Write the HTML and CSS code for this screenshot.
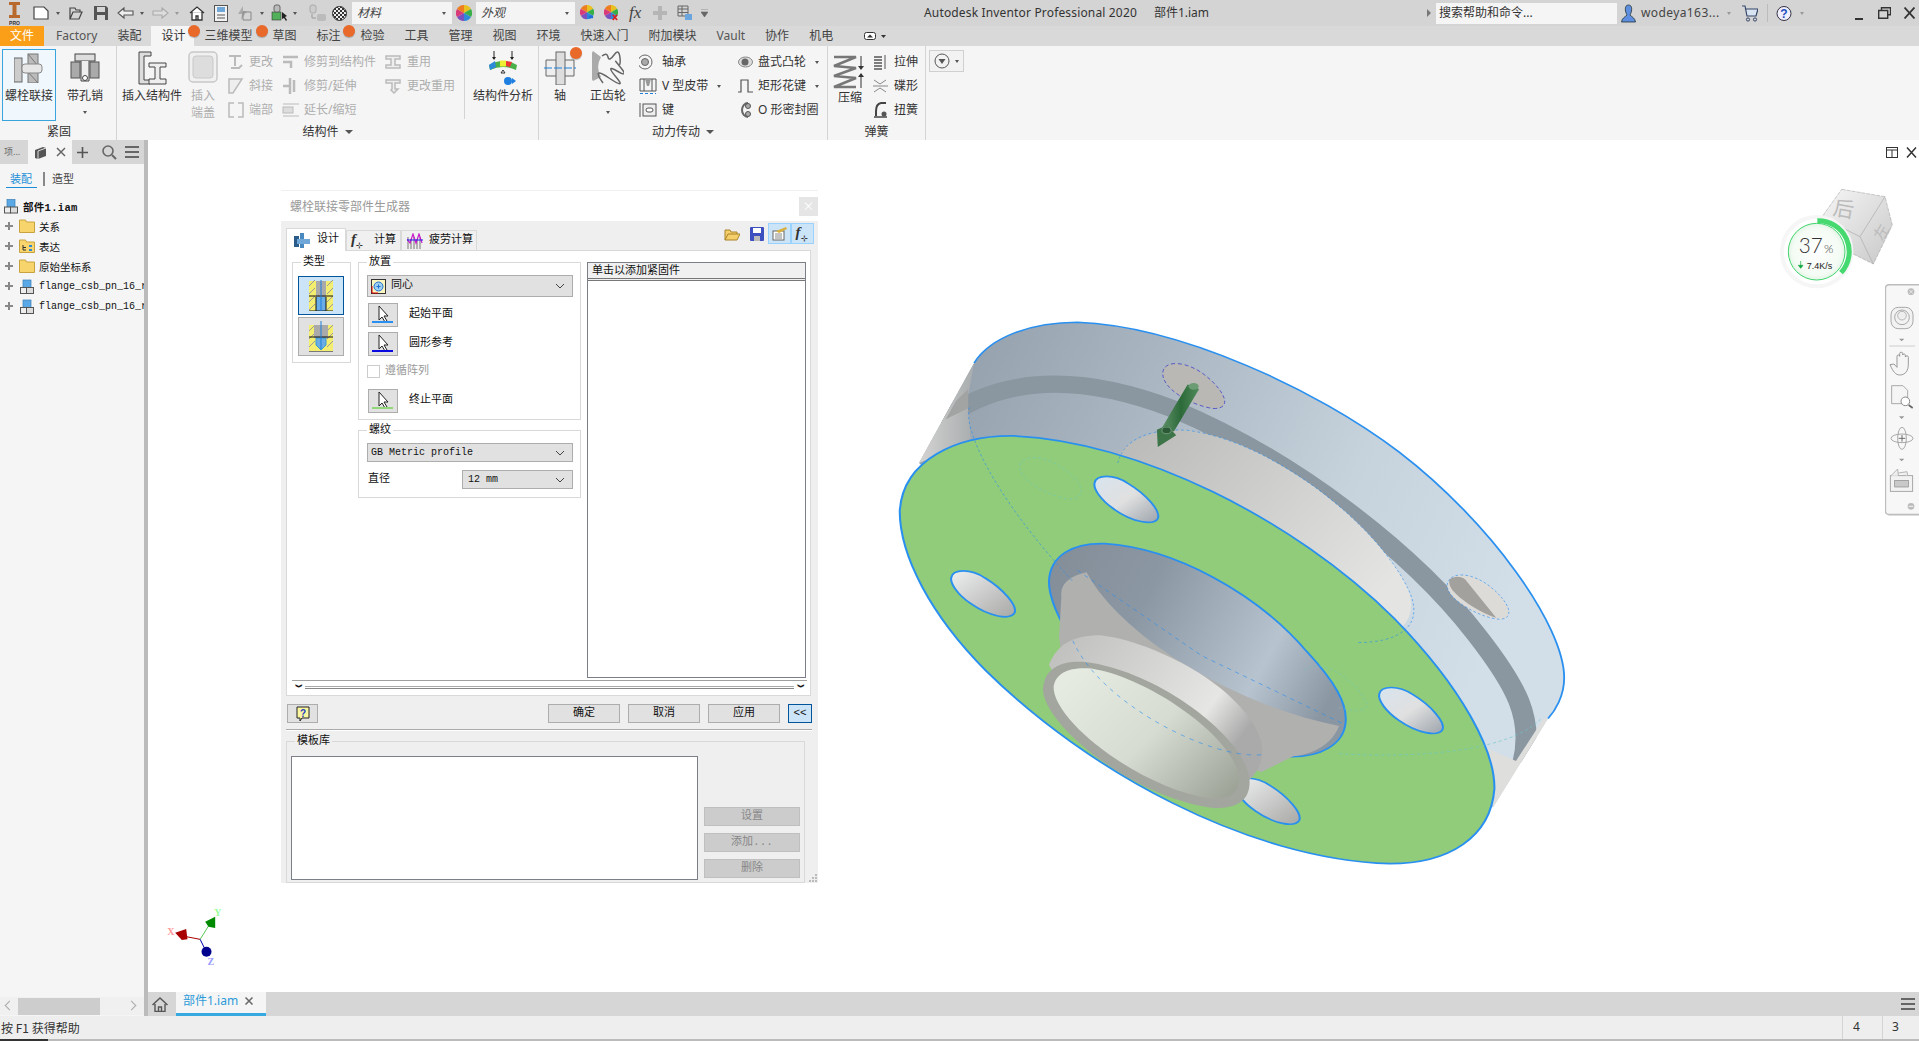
FILE: index.html
```html
<!DOCTYPE html>
<html lang="zh">
<head>
<meta charset="utf-8">
<title>Autodesk Inventor Professional 2020</title>
<link rel="stylesheet" href="styles.css">
</head>
<body>
<div class="app">
  <header class="titlebar">
    <svg class="i11 logo" width="11" height="24" viewBox="0 0 11 24"><path d="M0 1h11v3H7.5v10H11v3H0v-3h3.5V4H0z" fill="#b8692e"/><text x="5.5" y="23.500" class="protext">PRO</text></svg>
    <svg class="m13" width="16" height="16" viewBox="0 0 16 16"><path d="M1 2h10l4 4v8H1z" fill="#fff" stroke="#444" stroke-width="1.2"/></svg>
    <i class="caret m7"></i>
    <svg class="m9" width="14" height="15" viewBox="0 0 14 15"><path d="M1 13V2h5l1 2h4v2M1 13l3-7h9l-3 7z" fill="none" stroke="#444" stroke-width="1.2"/></svg>
    <svg class="m10" width="16" height="16" viewBox="0 0 16 16"><path d="M1 1h12l2 2v12H1z" fill="#555"/><rect x="4" y="2" width="8" height="5" fill="#d6d6d6"/><rect x="4" y="10" width="8" height="5" fill="#d6d6d6"/></svg>
    <svg class="m8" width="17" height="14" viewBox="0 0 17 14"><path d="M7 2L1 7l6 5V9h9V5H7z" fill="#eee" stroke="#555" stroke-width="1.100"/></svg>
    <i class="caret m6"></i>
    <svg class="m8" width="17" height="14" viewBox="0 0 17 14"><path d="M10 2l6 5-6 5V9H1V5h9z" fill="#ddd" stroke="#aaa" stroke-width="1.100"/></svg>
    <i class="caret m6 light"></i>
    <svg class="m10" width="16" height="16" viewBox="0 0 16 16"><path d="M1 8l7-6 7 6M3 7v8h10V7M7 15v-4h2v4" fill="#fff" stroke="#333" stroke-width="1.300"/></svg>
    <svg class="m9" width="14" height="17" viewBox="0 0 14 17"><rect x=".5" y=".5" width="13" height="16" fill="#f3f3f3" stroke="#555"/><rect x="3" y="2" width="8" height="5" fill="#6ea7d8"/><path d="M3 10h8M3 13h8" stroke="#555"/></svg>
    <svg class="m9" width="15" height="16" viewBox="0 0 15 16"><path d="M6 1L1 9h4l-1 6 6-9H6z" fill="#aaa"/><path d="M6 7h8v8H6z" fill="none" stroke="#888"/></svg>
    <i class="caret m8"></i>
    <svg class="m7" width="18" height="18" viewBox="0 0 18 18"><rect x="1" y="8" width="9" height="8" fill="#53b05a" stroke="#333" stroke-width=".6"/><rect x="3" y="1" width="6" height="7" rx="2" fill="#bbb" stroke="#666"/><path d="M11 8l5 4-2 1 2 3-1 1-2-3-2 1z" fill="#222"/></svg>
    <i class="caret m4"></i>
    <svg class="m11" width="19" height="18" viewBox="0 0 19 18"><rect x="2" y="1" width="6" height="8" rx="2" fill="#ccc" stroke="#aaa"/><rect x="9" y="10" width="9" height="7" rx="2" fill="#bbb"/><path d="M4 10v4h4" fill="none" stroke="#999"/></svg>
    <svg class="m5" width="15" height="15" viewBox="0 0 15 15"><defs><pattern id="chk" width="4" height="4" patternUnits="userSpaceOnUse"><rect width="4" height="4" fill="#eee"/><rect width="2" height="2" fill="#333"/><rect x="2" y="2" width="2" height="2" fill="#333"/></pattern></defs><circle cx="7.500" cy="7.500" r="7" fill="url(#chk)" stroke="#333"/></svg>
    <div class="combo m5 c100"><span>材料</span><i class="caret"></i></div>
    <svg class="m4" width="16" height="16" viewBox="0 0 16 16"><use href="#wheel"/></svg>
    <div class="combo m4 c99"><span>外观</span><i class="caret"></i></div>
    <svg class="m5" width="14" height="16" viewBox="0 0 16 18"><use href="#wheel"/><path d="M10 12h5v3h-5z" fill="#1e6fd8"/></svg>
    <svg class="m10" width="14" height="16" viewBox="0 0 16 18"><use href="#wheel"/><path d="M10 11l5 6M15 11l-5 6" stroke="#d22" stroke-width="2"/></svg>
    <span class="fx m11">fx</span>
    <svg class="m10" width="14" height="14" viewBox="0 0 14 14"><path d="M5 0h4v5h5v4H9v5H5V9H0V5h5z" fill="#b5b5b5"/></svg>
    <svg class="m10" width="16" height="16" viewBox="0 0 16 16"><path d="M1 1h10v10H1zM1 4h10M1 7.500h10M5 1v10" fill="none" stroke="#666"/><rect x="8" y="9" width="7" height="6" fill="#6aa5dd"/></svg>
    <svg class="m8" width="7" height="8" viewBox="0 0 7 8"><path d="M0 0h7M0 3h7L3.500 8z" fill="#666" stroke="#666" stroke-width=".6"/></svg>
    <span class="apptitle">Autodesk Inventor Professional 2020<span class="docname">部件1.iam</span></span>
    <div class="tb-right">
      <i class="caret-r"></i>
      <div class="search m5">搜索帮助和命令...</div>
      <svg class="m4" width="15" height="19" viewBox="0 0 15 19"><path d="M7.500 1c3 0 3.500 3 3 6-.4 2-1 3-1.500 4 2 2 5 3 5.500 7H.5C1 14 4 13 6 11c-.5-1-1.100-2-1.500-4-.5-3 0-6 3-6z" fill="#5d8ee0" stroke="#233" stroke-width=".8"/></svg>
      <span class="username m5">wodeya163...</span>
      <i class="caret m9 light"></i>
      <svg class="m11" width="16" height="17" viewBox="0 0 16 17"><path d="M0 1h3l2 10h9l2-7H4" fill="#d8e4f2" stroke="#346" stroke-width="1.200"/><circle cx="6" cy="14.500" r="1.600" fill="none" stroke="#346"/><circle cx="13" cy="14.500" r="1.600" fill="none" stroke="#346"/></svg>
      <i class="vsep m9"></i>
      <svg class="m8" width="16" height="17" viewBox="0 0 16 17"><circle cx="8" cy="8.500" r="7" fill="#eef" stroke="#334"/><text x="8" y="13" class="qmark">?</text></svg>
      <i class="caret m8 light"></i>
      <svg class="m51" width="8" height="16" viewBox="0 0 8 16"><rect y="13" width="8" height="2" fill="#333"/></svg>
      <svg class="m15" width="13" height="12" viewBox="0 0 13 12"><path d="M3.500 3V.8h9v7H10M.7 3.500h9v7.700h-9z" fill="none" stroke="#333" stroke-width="1.400"/></svg>
      <svg class="m13" width="11" height="12" viewBox="0 0 11 12"><path d="M.5 .5l10 11M10.500 .5l-10 11" stroke="#333" stroke-width="1.800"/></svg>
    </div>
  </header>
  <svg class="defs" width="0" height="0"><defs>
    <g id="wheel"><path d="M8 8L8 0A8 8 0 0 1 15 4z" fill="#e8c020"/><path d="M8 8L15 4A8 8 0 0 1 15 12z" fill="#38b048"/><path d="M8 8L15 12A8 8 0 0 1 8 16z" fill="#2d8ad8"/><path d="M8 8L8 16A8 8 0 0 1 1 12z" fill="#7a4fc0"/><path d="M8 8L1 12A8 8 0 0 1 1 4z" fill="#d83a7a"/><path d="M8 8L1 4A8 8 0 0 1 8 0z" fill="#ee7d20"/></g>
    <g id="asm"><rect x="3" y="1" width="8" height="9" fill="#5aa9e6" stroke="#3a7fb8" stroke-width=".7"/><rect x=".5" y="8.500" width="6" height="6" fill="#eee" stroke="#555"/><rect x="6.500" y="8.500" width="7" height="6" fill="#ddd" stroke="#555"/></g>
    <g id="cursorbtn"><path d="M10 2v14l3-3 3 5 2-1-3-5h4z" fill="#fff" stroke="#222"/></g>
    <linearGradient id="hole" x1="0" y1="0" x2="1" y2="1"><stop offset="0" stop-color="#eef0f0"/><stop offset="1" stop-color="#a8a8a6"/></linearGradient>
    <linearGradient id="holeblue" x1="0" y1="0" x2="1" y2="1"><stop offset="0" stop-color="#d8e4ee"/><stop offset=".5" stop-color="#e0e0e0"/><stop offset="1" stop-color="#9ca4ac"/></linearGradient>
  </defs></svg>
  <nav class="tabs">
    <span class="tab file">文件</span>
    <span class="tab lat">Factory</span>
    <span class="tab">装配</span>
    <span class="tab active">设计</span>
    <span class="tab">三维模型</span>
    <span class="tab">草图</span>
    <span class="tab">标注</span>
    <span class="tab">检验</span>
    <span class="tab">工具</span>
    <span class="tab">管理</span>
    <span class="tab">视图</span>
    <span class="tab">环境</span>
    <span class="tab">快速入门</span>
    <span class="tab">附加模块</span>
    <span class="tab lat">Vault</span>
    <span class="tab">协作</span>
    <span class="tab">机电</span>
    <svg class="tabmenu" width="22" height="8" viewBox="0 0 22 8"><rect x=".5" y=".5" width="11" height="7" rx="2" fill="#fff" stroke="#333"/><path d="M3 5.500l3-3 3 3z" fill="#333"/><path d="M17 3h5l-2.500 3z" fill="#333"/></svg>
    <i class="dot d1"></i><i class="dot d2"></i><i class="dot d3"></i>
  </nav>
  <section class="ribbon">
    <div class="panel p1">
      <div class="pbody">
        <div class="big selected w54">
          <svg width="30" height="30" viewBox="0 0 30 30"><rect x="14" y="1" width="10" height="12" fill="#bbb" stroke="#777"/><rect x="14" y="19" width="10" height="11" fill="#bbb" stroke="#777"/><path d="M14 1l10 12M14 19l10 11" stroke="#777"/><rect x="0" y="5" width="8" height="24" fill="#ccc" stroke="#666"/><rect x="8" y="11" width="20" height="9" rx="3" fill="#e6e6e6" stroke="#888"/></svg>
          <span class="lbl">螺栓联接</span>
        </div>
        <div class="big w58">
          <svg width="30" height="30" viewBox="0 0 30 30"><rect x="1" y="9" width="9" height="16" fill="#aaa" stroke="#555"/><rect x="20" y="9" width="9" height="16" fill="#aaa" stroke="#555"/><rect x="5" y="1" width="20" height="7" fill="#ddd" stroke="#444"/><path d="M11 8v20h8V8" fill="#eee" stroke="#444"/><circle cx="15" cy="25" r="2.500" fill="#fff" stroke="#444"/></svg>
          <span class="lbl">带孔销</span><i class="caret under"></i>
        </div>
      </div>
      <div class="ptitle">紧固</div>
    </div>
    <div class="panel p2">
      <div class="pbody">
        <div class="big w60 ml5">
          <svg width="30" height="34" viewBox="0 0 30 34"><path d="M2 1h12v4H7v24h6v4H2z" fill="#ddd" stroke="#444"/><path d="M12 12h17v4h-6v12h6v5H12v-5h6V16h-6z" fill="#eee" stroke="#444"/></svg>
          <span class="lbl">插入结构件</span>
        </div>
        <div class="big w34 ml4 off">
          <svg width="30" height="32" viewBox="0 0 30 32"><rect x="1" y="1" width="28" height="30" rx="4" fill="#f0f0f0" stroke="#c8c8c8" stroke-width="1.500"/><rect x="5" y="5" width="20" height="22" rx="3" fill="#ddd" stroke="#c8c8c8"/></svg>
          <span class="lbl two">插入<br>端盖</span>
        </div>
        <div class="col c54 ml8 off">
          <div class="row"><svg class="ic" width="16" height="16" viewBox="0 0 16 16"><path d="M1 2h12M7 2v10M3 14h8l3-3" fill="none" stroke="#bbb" stroke-width="2"/></svg><span>更改</span></div>
          <div class="row"><svg class="ic" width="16" height="16" viewBox="0 0 16 16"><path d="M1 1h13L5 15H1z" fill="#eee" stroke="#bbb" stroke-width="1.500"/></svg><span>斜接</span></div>
          <div class="row"><svg class="ic" width="16" height="16" viewBox="0 0 16 16"><path d="M6 1H1v14h5M10 1h5v14h-5" fill="none" stroke="#bbb" stroke-width="1.500"/></svg><span>端部</span></div>
        </div>
        <div class="col c103 off">
          <div class="row"><svg class="ic17" width="17" height="16" viewBox="0 0 17 16"><path d="M1 3h15M1 8h8v6" fill="none" stroke="#bbb" stroke-width="2.500"/></svg><span>修剪到结构件</span></div>
          <div class="row"><svg class="ic17" width="17" height="16" viewBox="0 0 17 16"><path d="M8 0v16M12 2v12M1 8h6" fill="none" stroke="#bbb" stroke-width="2.500"/></svg><span>修剪/延伸</span></div>
          <div class="row"><svg class="ic17" width="17" height="16" viewBox="0 0 17 16"><path d="M1 2h16M1 14h16" fill="none" stroke="#bbb"/><rect x="1" y="5" width="10" height="6" fill="#ddd" stroke="#bbb"/></svg><span>延长/缩短</span></div>
        </div>
        <div class="col c79 off">
          <div class="row wide"><svg class="ic" width="16" height="16" viewBox="0 0 16 16"><path d="M1 2h14v3h-5v6h5v3H1v-3h5V5H1z" fill="#eee" stroke="#bbb" stroke-width="1.500"/></svg><span>重用</span></div>
          <div class="row wide"><svg class="ic" width="16" height="16" viewBox="0 0 16 16"><path d="M1 2h14v3h-5v6h3l-4 4-3-3 1-1V5H1z" fill="#eee" stroke="#bbb" stroke-width="1.500"/></svg><span>更改重用</span></div>
        </div>
        <i class="rsep"></i>
        <div class="big w60 ml8">
          <svg width="30" height="36" viewBox="0 0 30 36"><path d="M6 0v8M24 0v8" stroke="#222"/><path d="M4 6l2 3 2-3zM22 6l2 3 2-3z" fill="#222"/><path d="M1 14q14-8 28 0l-1 5q-13-6-26 0z" fill="#4ab04a"/><path d="M1 14l6-4 1 6-6 3z" fill="#2d8ad8"/><path d="M12 9.500h6v6h-6z" fill="#ee3"/><path d="M18 10l6 1-2 5-4-1z" fill="#e33"/><path d="M13 22l2-3 2 3z" fill="none" stroke="#333"/><circle cx="20" cy="30" r="4" fill="#1e7fe0"/><path d="M24 27l4 3-4 3z" fill="#1e7fe0"/></svg>
          <span class="lbl">结构件分析</span>
        </div>
      </div>
      <div class="ptitle">结构件<i class="caret ct"></i></div>
    </div>
    <div class="panel p3">
      <div class="pbody">
        <div class="big w36 ml3">
          <svg width="32" height="34" viewBox="0 0 32 34"><path d="M2 9h28v16H2z" fill="#eee" stroke="#666"/><rect x="12" y="1" width="9" height="33" fill="#ddd" stroke="#666"/><path d="M0 17h32" stroke="#1e7fd8" stroke-dasharray="8 2"/></svg>
          <span class="lbl">轴</span>
          <i class="dot d4"></i>
        </div>
        <div class="big w40 ml10">
          <svg width="32" height="36" viewBox="0 0 32 36"><path d="M1 0a30 30 0 0 0 0 30l8-4a20 20 0 0 1 0-20z" fill="#aaa"/><path d="M10 5q5-4 6 1t6-2 6 3-3 5 4 5-4 3-1 6-7 1-6 5" fill="none" stroke="#666" stroke-width="1.500"/></svg>
          <span class="lbl">正齿轮</span><i class="caret under"></i>
        </div>
        <div class="col c98 ml11">
          <div class="row r18"><svg class="ic18" width="18" height="16" viewBox="0 0 18 16"><circle cx="6" cy="8" r="7" fill="none" stroke="#666"/><circle cx="6" cy="8" r="3.500" fill="#aaa" stroke="#666"/></svg><span>轴承</span></div>
          <div class="row r18"><svg class="ic18" width="18" height="16" viewBox="0 0 18 16"><path d="M1 1h16v12H1zM5 1v12M13 1v12" fill="none" stroke="#555"/><path d="M6 1h6l-2 7H8z" fill="#999"/><path d="M1 15.500h16" stroke="#1e7fd8" stroke-dasharray="3 2"/></svg><span>V 型皮带</span><i class="caret cr"></i></div>
          <div class="row r18"><svg class="ic18" width="18" height="16" viewBox="0 0 18 16"><path d="M1 1v14" stroke="#555"/><rect x="4" y="2" width="13" height="12" fill="#eee" stroke="#555"/><rect x="7" y="6" width="7" height="4" rx="2" fill="#fff" stroke="#555"/></svg><span>键</span></div>
        </div>
        <div class="col c90 ml1">
          <div class="row r15"><svg class="ic15" width="15" height="12" viewBox="0 0 15 12"><ellipse cx="7.500" cy="6" rx="7" ry="5" fill="#ddd" stroke="#888"/><circle cx="7" cy="6" r="3.500" fill="#666"/></svg><span>盘式凸轮</span><i class="caret cr"></i></div>
          <div class="row r15"><svg class="ic15" width="15" height="14" viewBox="0 0 15 14"><path d="M0 13h3V1h7v12h5" fill="none" stroke="#555" stroke-width="1.200"/></svg><span>矩形花键</span><i class="caret cr"></i></div>
          <div class="row r15"><svg class="ic15" width="15" height="16" viewBox="0 0 15 16"><path d="M10 1a6 7 0 1 0 0 14" fill="none" stroke="#666" stroke-width="2"/><circle cx="10" cy="4" r="2.500" fill="#aaa" stroke="#555"/><circle cx="10" cy="12" r="2.500" fill="#aaa" stroke="#555"/></svg><span>O 形密封圈</span></div>
        </div>
      </div>
      <div class="ptitle">动力传动<i class="caret ct"></i></div>
    </div>
    <div class="panel p4">
      <div class="pbody">
        <div class="big w44">
          <svg class="spring" width="34" height="34" viewBox="0 0 34 34"><path d="M1 2h22L1 11l22 2L1 21l22 2L1 32h22" fill="none" stroke="#777" stroke-width="2.500"/><path d="M28 1v12M28 33V20" stroke="#333"/><path d="M25 11l3 4 3-4zM25 22l3-4 3 4z" fill="#333"/></svg>
          <span class="lbl">压缩</span>
        </div>
        <div class="col c50">
          <div class="row r15b"><svg class="ic15" width="15" height="16" viewBox="0 0 15 16"><path d="M1 3h8M1 6h8M1 9h8M1 12h8M1 15h8" stroke="#555" stroke-width="1.400"/><path d="M12 1v14" stroke="#555"/></svg><span>拉伸</span></div>
          <div class="row r15b"><svg class="ic15" width="15" height="14" viewBox="0 0 15 14"><path d="M1 1l6 4 6-4M1 13l6-4 6 4M0 7h15" fill="none" stroke="#888"/></svg><span>碟形</span></div>
          <div class="row r15b"><svg class="ic15" width="15" height="16" viewBox="0 0 15 16"><path d="M13 1H8Q3 2 3 9v5" fill="none" stroke="#444" stroke-width="2"/><path d="M1 15h13" stroke="#444" stroke-width="1.500"/><circle cx="11" cy="12" r="2.500" fill="#555"/></svg><span>扭簧</span></div>
        </div>
      </div>
      <div class="ptitle">弹簧</div>
    </div>
    <div class="rdrop">
      <svg width="16" height="16" viewBox="0 0 16 16"><circle cx="8" cy="8" r="7" fill="none" stroke="#555"/><path d="M4.500 6h7L8 11z" fill="#555"/></svg>
      <i class="caret"></i>
    </div>
  </section>
  <main class="middle">
    <aside class="browser">
      <div class="bhead">
        <span class="btab">项...</span>
        <span class="btab act"><svg width="13" height="13" viewBox="0 0 13 13"><path d="M1 4l8-3 3 1v8l-8 3-3-1z" fill="#555"/><path d="M4 5l8-3M4 5v8" stroke="#ddd"/></svg><svg width="10" height="10" viewBox="0 0 10 10"><path d="M1 1l8 8M9 1l-8 8" stroke="#666" stroke-width="1.500"/></svg></span>
        <svg class="bplus" width="11" height="11" viewBox="0 0 11 11"><path d="M5.500 0v11M0 5.500h11" stroke="#555" stroke-width="1.600"/></svg>
        <svg class="bsearch" width="15" height="15" viewBox="0 0 15 15"><circle cx="6" cy="6" r="5" fill="none" stroke="#666" stroke-width="1.600"/><path d="M10 10l4 4" stroke="#666" stroke-width="2"/></svg>
        <svg class="bmenu" width="14" height="12" viewBox="0 0 14 12"><path d="M0 1h14M0 6h14M0 11h14" stroke="#666" stroke-width="2"/></svg>
      </div>
      <div class="seg"><span class="segon">装配</span><i class="segbar"></i><span class="segoff">造型</span></div>
      <ul class="tree">
        <li class="root"><svg width="14" height="16" viewBox="0 0 14 15"><use href="#asm"/></svg><b>部件1.iam</b></li>
        <li><i class="plus"></i><svg class="folder" width="16" height="14" viewBox="0 0 16 14"><path d="M.5 13.500V1h6l1 2h8v10.500z" fill="#f8d56c" stroke="#c9a240"/></svg><span>关系</span></li>
        <li><i class="plus"></i><svg class="folder" width="16" height="14" viewBox="0 0 16 14"><path d="M.5 13.500V1h6l1 2h8v10.500z" fill="#f8d56c" stroke="#c9a240"/><path d="M4 6v5h3M4 8.500h3" fill="none" stroke="#333"/><rect x="10" y="6" width="3" height="2" fill="#2d8ad8"/><rect x="10" y="10" width="3" height="2" fill="#2d8ad8"/></svg><span>表达</span></li>
        <li><i class="plus"></i><svg class="folder" width="16" height="14" viewBox="0 0 16 14"><path d="M.5 13.500V1h6l1 2h8v10.500z" fill="#f8d56c" stroke="#c9a240"/></svg><span>原始坐标系</span></li>
        <li><i class="plus"></i><svg class="folder" width="14" height="15" viewBox="0 0 14 15"><use href="#asm"/></svg><span class="clip">flange_csb_pn_16_r</span></li>
        <li><i class="plus"></i><svg class="folder" width="14" height="15" viewBox="0 0 14 15"><use href="#asm"/></svg><span class="clip">flange_csb_pn_16_r</span></li>
      </ul>
      <div class="hscroll"><i class="hl"></i><i class="thumb"></i><i class="hr"></i></div>
    </aside>
    <div class="splitter"></div>
    <div class="workarea">
      <div class="canvas">
        <svg class="model" width="720" height="580" viewBox="0 0 1568 1566" preserveAspectRatio="none">
          <defs>
            <clipPath id="sil"><path d="M85 440L205 170C240 100 330 60 430 60C650 70 950 240 1130 410C1330 600 1490 880 1490 1020C1490 1070 1470 1110 1455 1130L1335 1370L600 1000Z"/></clipPath>
            <linearGradient id="rim" x1="0" y1="0" x2="1" y2=".35"><stop offset="0" stop-color="#8f9ba6"/><stop offset=".35" stop-color="#a9b5c0"/><stop offset=".7" stop-color="#c6d2dc"/><stop offset="1" stop-color="#d2dee8"/></linearGradient>
            <linearGradient id="wedge" x1="0" y1="0" x2="1" y2="0"><stop offset="0" stop-color="#d4d4d2"/><stop offset="1" stop-color="#a8acae"/></linearGradient>
            <linearGradient id="neck" x1="0" y1="0" x2="1" y2=".6"><stop offset="0" stop-color="#b8b8b6"/><stop offset="1" stop-color="#e4e4e2"/></linearGradient>
            <linearGradient id="recess" x1="0" y1=".2" x2="1" y2=".6"><stop offset="0" stop-color="#858f9a"/><stop offset=".3" stop-color="#8b97a3"/><stop offset=".75" stop-color="#b7c3cf"/><stop offset="1" stop-color="#8a96a2"/></linearGradient>
            <linearGradient id="hub" x1="0" y1="0" x2="1" y2=".5"><stop offset="0" stop-color="#bdbdbb"/><stop offset=".5" stop-color="#d6d6d4"/><stop offset=".8" stop-color="#e6e6e4"/><stop offset="1" stop-color="#aaa"/></linearGradient>
            <linearGradient id="face" x1="0" y1=".2" x2="1" y2=".9"><stop offset="0" stop-color="#e6ebe2"/><stop offset=".5" stop-color="#d6dcd2"/><stop offset="1" stop-color="#9ea398"/></linearGradient>
            <linearGradient id="arrow" x1="0" y1="0" x2="1" y2="0"><stop offset="0" stop-color="#5d9067"/><stop offset=".5" stop-color="#2d6a3a"/><stop offset="1" stop-color="#4f8a5a"/></linearGradient>
          </defs>
          <path d="M85 440L205 170C240 100 330 60 430 60C650 70 950 240 1130 410C1330 600 1490 880 1490 1020C1490 1070 1470 1110 1455 1130L1335 1370L600 1000Z" fill="url(#rim)"/>
          <g clip-path="url(#sil)"><path d="M130 330C260 205 430 195 640 295C900 430 1160 680 1300 905C1385 1040 1425 1130 1400 1250" fill="none" stroke="#8a96a0" stroke-width="46"/></g>
          <path d="M85 440L205 170L190 270L198 380Z" fill="url(#wedge)"/>
          <path d="M192 240L192 292L143 322L166 272Z" fill="#a2a3a3"/>
          <path d="M505 440C540 370 600 350 670 352C850 380 1080 600 1150 780C1175 860 1130 925 1040 925Z" fill="url(#neck)"/>
          <path d="M1322 1210L1385 1245L1445 1130L1455 1130L1335 1370Z" fill="#dededc"/>
          <path d="M1235 770C1240 730 1290 735 1330 775C1370 815 1385 860 1350 862C1310 860 1235 810 1235 770Z" fill="#dddbd8"/>
          <path d="M1240 755C1250 745 1265 745 1275 755L1342 858C1320 850 1290 830 1270 810C1250 790 1237 775 1240 755Z" fill="#a3a19e"/>
          <path d="M1235 770C1240 730 1290 735 1330 775C1370 815 1385 860 1350 862C1310 860 1235 810 1235 770Z" fill="none" stroke="#2a90f0" stroke-width="1.500" stroke-dasharray="6 5"/>
          <path d="M616 195C620 160 670 165 710 205C750 245 770 295 725 293C680 285 612 240 616 195Z" fill="#b9b8b4"/>
          <path d="M616 195C620 160 670 165 710 205C750 245 770 295 725 293C680 285 612 240 616 195Z" fill="none" stroke="#2222cc" stroke-width="1.500" stroke-dasharray="9 6"/>
          <path d="M43 570C50 430 170 365 290 367C560 380 900 590 1120 860C1270 1050 1340 1220 1338 1320C1330 1450 1240 1522 1110 1522C800 1510 450 1270 230 1000C110 850 43 690 43 570Z" fill="#90cc7a"/>
          <path d="M205 170C240 100 330 60 430 60C650 70 950 240 1130 410C1330 600 1490 880 1490 1020C1490 1070 1470 1110 1455 1130" fill="none" stroke="#2a90f0" stroke-width="4"/>
          <path d="M43 570C50 430 170 365 290 367C560 380 900 590 1120 860C1270 1050 1340 1220 1338 1320C1330 1450 1240 1522 1110 1522C800 1510 450 1270 230 1000C110 850 43 690 43 570Z" fill="none" stroke="#2a90f0" stroke-width="4.500"/>
          <path d="M467 495C470 470 510 470 540 495C580 525 612 570 605 590C595 610 550 600 510 565C480 540 465 510 467 495Z" fill="url(#holeblue)" stroke="#2a90f0" stroke-width="4.500"/>
          <path d="M155 750C158 725 198 725 228 750C268 780 300 825 293 845C283 865 238 855 198 820C168 795 153 765 155 750Z" fill="url(#hole)" stroke="#2a90f0" stroke-width="4.500"/>
          <path d="M1087 1065C1090 1040 1130 1040 1160 1065C1200 1095 1232 1140 1225 1160C1215 1180 1170 1170 1130 1135C1100 1110 1085 1080 1087 1065Z" fill="url(#holeblue)" stroke="#2a90f0" stroke-width="4.500"/>
          <path d="M775 1310C778 1285 818 1285 848 1310C888 1340 920 1385 913 1405C903 1425 858 1415 818 1380C788 1355 773 1325 775 1310Z" fill="url(#hole)" stroke="#2a90f0" stroke-width="4.500"/>
          <path d="M368 760C370 690 420 655 490 658C640 670 820 790 930 950C990 1030 1018 1090 1014 1140C1010 1200 960 1235 890 1233C700 1220 480 1060 400 880C378 830 368 790 368 760Z" fill="url(#recess)" stroke="#2a90f0" stroke-width="4.500"/>
          <path d="M395 800C392 770 410 745 450 735C520 900 760 1090 1000 1150C985 1195 950 1225 900 1232L830 1275L400 1000L390 910Z" fill="#b0b0ae"/>
          <path d="M368 985C385 930 420 905 480 905C590 920 790 1040 830 1190C838 1240 825 1275 800 1300L420 1100Z" fill="url(#hub)"/>
          <path d="M355 1050C358 990 400 972 450 978C600 1000 800 1180 805 1300C805 1350 780 1372 730 1372C560 1350 355 1150 355 1050Z" fill="#a3a69f"/>
          <path d="M378 1045C382 1005 415 990 460 995C590 1020 780 1190 782 1295C780 1335 760 1348 720 1346C570 1320 378 1140 378 1045Z" fill="url(#face)"/>
          <path d="M195 290C180 340 240 520 420 760" fill="none" stroke="#2a90f0" stroke-width="1.500" stroke-dasharray="7 6"/>
          <path d="M1000 1225C1200 1240 1380 1210 1440 1130" fill="none" stroke="#6ac8c8" stroke-width="1.500" stroke-dasharray="7 6"/>
          <path d="M430 730L700 960L1010 1145" fill="none" stroke="#2a90f0" stroke-width="1.500" stroke-dasharray="10 10"/>
          <path d="M518 440C530 370 600 345 670 352C850 380 1080 600 1150 780C1190 880 1130 925 1040 925" fill="none" stroke="#2a90f0" stroke-width="1.500" stroke-dasharray="6 6"/>
          <path d="M420 920C480 1090 720 1240 830 1228" fill="none" stroke="#2a90f0" stroke-width="1.500" stroke-dasharray="10 12"/>
          <path d="M925 1000C960 960 1040 1030 1060 1090C1060 1115 1030 1110 1000 1100" fill="none" stroke="#6ac8c8" stroke-width="1.200" stroke-dasharray="6 6"/>
          <path d="M305 445C320 405 390 430 430 490C450 525 430 545 400 535C350 520 300 480 305 445Z" fill="none" stroke="#6ac8c8" stroke-width="1.200" stroke-dasharray="6 6"/>
          <path d="M670 228L695 240L640 355L615 343Z" fill="url(#arrow)"/>
          <ellipse cx="683" cy="233" rx="11" ry="9" fill="#6b9c74"/>
          <path d="M603 350L625 338L645 365L605 397Z" fill="#3d7548"/>
          <ellipse cx="624" cy="352" rx="10" ry="9" fill="#2d5a36" stroke="#7aa684" stroke-width="2"/>
        </svg>
        <svg class="gauge" width="159" height="250" viewBox="0 30 477 750">
          <defs><radialGradient id="gfill" cx=".5" cy=".5" r=".6"><stop offset="0" stop-color="#fff"/><stop offset=".7" stop-color="#f4fbf4"/><stop offset="1" stop-color="#cfeed5"/></radialGradient><linearGradient id="cube" x1="0" y1="0" x2="1" y2="1"><stop offset="0" stop-color="#f6f6f6"/><stop offset="1" stop-color="#c8c8c8"/></linearGradient></defs>
          <path d="M245 178L375 200L397 285L340 402L265 365L185 262Z" fill="url(#cube)" stroke="#999" stroke-width="1.500" stroke-dasharray="12 3"/>
          <path d="M375 200L300 320L340 402M300 320L185 262" fill="none" stroke="#aaa" stroke-width="2"/>
          <text x="220" y="262" class="cubetxt" transform="rotate(10 265 240)">后</text>
          <text x="335" y="330" class="cubetxt small" transform="rotate(-60 355 305)">左</text>
          <circle cx="170" cy="365" r="104" fill="#fff" stroke="#f6f6f6" stroke-width="12"/>
          <circle cx="170" cy="365" r="85" fill="url(#gfill)" stroke="#3fd46b" stroke-width="3"/>
          <path d="M172 272A93 93 0 0 1 243 428" fill="none" stroke="#45d96f" stroke-width="15"/>
          <text x="116" y="368" class="g37">37</text>
          <text x="192" y="369" class="gpc">%</text>
          <path d="M122 393v20M115 406l7 9 7-9z" fill="#12a83c" stroke="#12a83c" stroke-width="2"/>
          <text x="140" y="416" class="gk">7.4K/s</text>
        </svg>
        <svg class="navbar" width="36" height="232" viewBox="375 463 108 696">
          <rect x="376" y="465" width="120" height="690" rx="12" fill="#f7f7f7" stroke="#bdbdbd" stroke-width="5"/>
          <circle cx="453" cy="486" r="10" fill="#bbb"/><path d="M447 480l12 12M459 480l-12 12" stroke="#fff" stroke-width="2"/>
          <rect x="393" y="533" width="66" height="64" rx="22" fill="#f2f2f2" stroke="#999" stroke-width="2.500"/><circle cx="426" cy="563" r="22" fill="none" stroke="#999" stroke-width="2.500"/><circle cx="426" cy="558" r="13" fill="#eee" stroke="#999" stroke-width="2"/>
          <path d="M417 627h16l-8 8z" fill="#999"/><path d="M388 649h77" stroke="#bbb" stroke-width="2"/>
          <path d="M390 705l12-2 9 10V680a4 4 0 0 1 8 0v-8a4 4 0 0 1 9 0v4a4 4 0 0 1 8 2v4a4 4 0 0 1 9 2v20c0 18-8 32-26 32-12 0-20-10-29-31z" fill="#f5f5f5" stroke="#888" stroke-width="2.500"/>
          <path d="M395 768h34l14 14v40h-48z" fill="#f5f5f5" stroke="#999" stroke-width="2.500"/><circle cx="436" cy="815" r="13" fill="#fff" stroke="#888" stroke-width="3"/><path d="M446 826l12 9" stroke="#666" stroke-width="5"/>
          <path d="M417 860h16l-8 8z" fill="#999"/>
          <ellipse cx="426" cy="926" rx="33" ry="13" fill="none" stroke="#999" stroke-width="2.500"/><ellipse cx="426" cy="926" rx="13" ry="33" fill="none" stroke="#999" stroke-width="2.500"/><path d="M416 926h20M426 916v20" stroke="#555" stroke-width="2.500"/>
          <path d="M417 987h16l-8 8z" fill="#999"/>
          <rect x="391" y="1038" width="67" height="47" fill="#f2f2f2" stroke="#999" stroke-width="2.500"/><rect x="404" y="1052" width="41" height="20" fill="#c9c9c9" stroke="#888" stroke-width="2"/><path d="M393 1038l20-20 2 20M415 1030l26-4 2 12" fill="#eee" stroke="#999" stroke-width="2"/>
          <circle cx="453" cy="1130" r="10" fill="#bbb"/><path d="M446 1130h14" stroke="#fff" stroke-width="2.500"/>
        </svg>
        <svg class="corner" width="31" height="11" viewBox="0 0 31 11"><rect x=".5" y=".5" width="11" height="10" fill="#fff" stroke="#333"/><path d="M0 3h12M6 3v8" stroke="#333"/><path d="M21 .5l9 10M30 .5l-9 10" stroke="#333" stroke-width="1.500"/></svg>
        <svg class="triad" width="67" height="70" viewBox="480 30 200 210">
          <path d="M600 148L558 140" stroke="#a00" stroke-width="3"/><path d="M600 148L625 108" stroke="#0a0" stroke-width="2"/><path d="M600 148L618 185" stroke="#00a" stroke-width="3"/>
          <path d="M525 128L558 117L562 148L545 150Z" fill="#a80000"/><path d="M615 95L645 80V114L625 110Z" fill="#008a00"/><circle cx="619" cy="185" r="15" fill="#00008e"/>
          <text x="501" y="136" class="ax axx">X</text><text x="642" y="78" class="ax axy">Y</text><text x="622" y="225" class="ax axz">Z</text>
        </svg>
        <div class="dialog">
          <div class="dtitle"><span>螺栓联接零部件生成器</span><i class="dclose">×</i></div>
          <div class="dbody">
            <div class="dtabs">
              <div class="dtab on"><svg width="16" height="15" viewBox="0 0 16 15"><rect x="0" y="3" width="5" height="11" fill="#2b5b88"/><rect x="6" y="0" width="4" height="15" fill="#4a88c0"/><rect x="3" y="6" width="13" height="5" fill="#6ea7d8"/></svg><span>设计</span></div>
              <div class="dtab t2"><span class="fxi">f<sub>⊹</sub></span><span>计算</span></div>
              <div class="dtab t3"><svg width="16" height="16" viewBox="0 0 16 16"><path d="M1 4v12M4 6v10M7 4v12M10 6v10M13 4v12" stroke="#777"/><path d="M0 6l3 4 3-9 3 9 3-9 3 9" fill="none" stroke="#c818c8" stroke-width="1.200"/><path d="M0 7h16" stroke="#2222ee"/></svg><span>疲劳计算</span></div>
              <div class="dtools">
                <svg class="tool" width="16" height="14" viewBox="0 0 16 14"><path d="M1 13V3h5l1 2h6v2M1 13l3-6h12l-3 6z" fill="#f5cf6a" stroke="#a8842a"/></svg>
                <svg class="tool s1" width="14" height="14" viewBox="0 0 14 14"><rect width="14" height="14" rx="1" fill="#3b4fc0"/><rect x="3" y="1" width="8" height="5" fill="#fff"/><rect x="4" y="9" width="6" height="5" fill="#bbb"/></svg>
                <div class="toolon"><svg width="16" height="15" viewBox="0 0 16 15"><rect x="1" y="5" width="11" height="9" fill="#fff" stroke="#666"/><path d="M3 8h7M3 10h7M3 12h7" stroke="#888"/><path d="M4 5l10-4 1 2-8 4z" fill="#d8b040"/></svg></div>
                <div class="toolon"><span class="fxi">f<sub>⊹</sub></span></div>
              </div>
            </div>
            <div class="dpanel">
              <div class="dcols">
                <div class="group gtype">
                  <span class="legend">类型</span>
                  <div class="tbtn sel"><svg width="24" height="31" viewBox="0 0 24 31"><rect x="0" y="1" width="24" height="30" fill="#f4ee70"/><path d="M0 6l6-6M0 14l6-6M0 22l6-6M0 30l6-6M18 6l6-6M18 14l6-6M18 22l6-6M18 30l6-6" stroke="#999"/><rect x="7" y="1" width="10" height="16" fill="#aaa"/><rect x="7" y="17" width="10" height="14" fill="#6aace6"/><path d="M0 16h24M0 31h24M7 17v14M17 17v14" stroke="#111"/><path d="M12 0v31" stroke="#1e7fd8"/></svg></div>
                  <div class="tbtn"><svg width="24" height="31" viewBox="0 0 24 31"><rect x="0" y="4" width="24" height="26" fill="#f4ee70"/><path d="M0 10l6-6M0 18l6-6M0 26l6-6M18 10l6-6M18 18l6-6M18 26l6-6" stroke="#999"/><rect x="5" y="4" width="14" height="13" fill="#aaa"/><path d="M7 17h10v7l-5 5-5-5z" fill="#6aace6" stroke="#3a9ac8"/><path d="M0 16h24M0 31h24" stroke="#111"/><path d="M12 0v28" stroke="#1e7fd8"/></svg></div>
                </div>
                <div class="dcol2">
                  <div class="group gplace">
                    <span class="legend">放置</span>
                    <div class="dd"><svg class="ddic" width="15" height="15" viewBox="0 0 15 15"><rect x=".5" y=".5" width="14" height="14" fill="#fbf6c0" stroke="#333"/><circle cx="7.500" cy="7.500" r="4.500" fill="#9ccff0" stroke="#1e6fd0"/><path d="M5.500 7.500h4M7.500 5.500v4" stroke="#1e6fd0"/><path d="M1 7v7h6" fill="none" stroke="#d00"/></svg><span>同心</span><svg class="chev" width="10" height="6" viewBox="0 0 10 6"><path d="M1 1l4 4 4-4" fill="none" stroke="#444"/></svg></div>
                    <div class="prow first"><div class="pbtn"><svg width="30" height="24" viewBox="0 0 30 24"><use href="#cursorbtn" transform="translate(1 1)"/><rect x="4" y="18" width="21" height="2" fill="#2b8ff0"/></svg></div><span>起始平面</span></div>
                    <div class="prow second"><div class="pbtn"><svg width="30" height="24" viewBox="0 0 30 24"><use href="#cursorbtn" transform="translate(1 1)"/><rect x="4" y="18" width="21" height="2" fill="#0a0ae0"/></svg></div><span>圆形参考</span></div>
                    <div class="chkrow"><i class="chk"></i><span>遵循阵列</span></div>
                    <div class="prow last"><div class="pbtn"><svg width="30" height="24" viewBox="0 0 30 24"><use href="#cursorbtn" transform="translate(1 1)"/><rect x="4" y="18" width="21" height="2" fill="#90d878"/></svg></div><span>终止平面</span></div>
                  </div>
                  <div class="group gthread">
                    <span class="legend">螺纹</span>
                    <div class="dd thin mono"><span>GB Metric profile</span><svg class="chev" width="10" height="6" viewBox="0 0 10 6"><path d="M1 1l4 4 4-4" fill="none" stroke="#444"/></svg></div>
                    <div class="diarow"><span class="dialbl">直径</span><div class="dd thin mono w111"><span>12 mm</span><svg class="chev" width="10" height="6" viewBox="0 0 10 6"><path d="M1 1l4 4 4-4" fill="none" stroke="#444"/></svg></div></div>
                  </div>
                </div>
                <div class="fastlist"><div class="flhead">单击以添加紧固件</div></div>
              </div>
              <div class="expand"><span class="dbl">︾</span><i class="dline"></i><span class="dbl">︾</span></div>
            </div>
            <div class="dbtns">
              <div class="hbtn"><svg width="14" height="16" viewBox="0 0 14 16"><path d="M1 1h12v11H6l-2 3v-3H1z" fill="#fbf6a0" stroke="#222"/><text x="7" y="10.500" class="qm2">?</text></svg></div>
              <div class="btn okb">确定</div><div class="btn">取消</div><div class="btn">应用</div><div class="btn back">&lt;&lt;</div>
            </div>
            <div class="dsep"></div>
            <div class="group glib">
              <span class="legend">模板库</span>
              <div class="liblist"></div>
              <div class="libbtns"><div class="dis">设置</div><div class="dis">添加...</div><div class="dis">删除</div></div>
            </div>
            <svg class="grip" width="8" height="8" viewBox="0 0 8 8"><path d="M6 0h2v2H6zM3 3h2v2H3zM6 3h2v2H6zM0 6h2v2H0zM3 6h2v2H3zM6 6h2v2H6z" fill="#bbb"/></svg>
          </div>
        </div>
      </div>
      <div class="doctabs">
        <svg class="dhome" width="16" height="15" viewBox="0 0 16 15"><path d="M.5 8L8 1l7.500 7M3 7v7.500h10V7M6.500 14.500V10h3v4.500" fill="none" stroke="#555" stroke-width="1.400"/></svg>
        <div class="doctab"><span>部件1.iam</span><svg width="8" height="8" viewBox="0 0 8 8"><path d="M.5 .5l7 7M7.500 .5l-7 7" stroke="#666" stroke-width="1.500"/></svg></div>
        <svg class="dmenu" width="14" height="12" viewBox="0 0 14 12"><path d="M0 1h14M0 6h14M0 11h14" stroke="#666" stroke-width="2"/></svg>
      </div>
    </div>
  </main>
  <footer class="status">
    <span class="stext">按 F1 获得帮助</span>
    <span class="scell s4">4</span><span class="scell s3">3</span>
  </footer>
</div>
</body>
</html>
```
FILE: styles.css
```css
* { box-sizing: border-box; }
html, body { margin: 0; height: 100%; overflow: hidden; }
body { font: 12px/1.2 "Noto Sans", "Noto Sans CJK SC", sans-serif; color: #333; background: #fff; }
i { display: block; font-style: normal; }
svg { display: block; flex: none; }
.defs { position: absolute; }
.app { display: flex; flex-direction: column; width: 1919px; height: 1041px; }

.m4 { margin-left: 4px; } .m5 { margin-left: 5px; } .m6 { margin-left: 6px; } .m7 { margin-left: 7px; }
.m8 { margin-left: 8px; } .m9 { margin-left: 9px; } .m10 { margin-left: 10px; } .m11 { margin-left: 11px; }
.m13 { margin-left: 13px; } .m15 { margin-left: 15px; } .m51 { margin-left: 51px; }
.caret { width: 0; height: 0; border-left: 2.5px solid transparent; border-right: 2.5px solid transparent; border-top: 3px solid #555; flex: none; }
.caret.light { border-top-color: #999; }
.caret-r { width: 0; height: 0; border-top: 4px solid transparent; border-bottom: 4px solid transparent; border-left: 4px solid #777; }

.titlebar { display: flex; align-items: center; height: 26px; background: #d4d4d4; flex: none; }
.logo { margin-left: 9px; }
.protext { font: 700 5px "Liberation Sans", sans-serif; text-anchor: middle; fill: #333; }
.combo { display: flex; align-items: center; justify-content: space-between; height: 22px; padding: 0 6px 0 5px; background: #f4f4f4; font-size: 12px; font-style: italic; color: #444; }
.c100 { width: 100px; } .c99 { width: 99px; }
.fx { width: 14px; font: italic 17px "Liberation Serif", serif; color: #444; }
.apptitle { margin-left: 216px; font-size: 12px; letter-spacing: .16px; color: #333; white-space: nowrap; }
.docname { margin-left: 17px; letter-spacing: 0; }
.tb-right { display: flex; align-items: center; margin-left: auto; padding-right: 4px; }
.search { display: flex; align-items: center; width: 181px; height: 21px; padding-left: 3px; background: #f5f5f5; font-size: 12px; }
.username { width: 77px; white-space: nowrap; color: #444; letter-spacing: .4px; font-size: 12px; }
.vsep { width: 1px; height: 18px; background: #bbb; }
.qmark { font: 700 12px "Liberation Sans", sans-serif; text-anchor: middle; fill: #1e4fc0; }

.tabs { position: relative; display: flex; align-items: center; height: 20px; padding-right: 4px; background: #d9d9d9; flex: none; }
.tab { display: flex; align-items: center; height: 20px; padding: 0 10px; color: #444; white-space: nowrap; }
.tab.file { width: 44px; padding: 0; margin-right: 2px; justify-content: center; background: #fb9f18; color: #fff; }
.tab.active { width: 43px; background: #f5f5f5; color: #333; }
.tab.lat { letter-spacing: 0; color: #555; }
.tabmenu { margin-left: 21px; }
.dot { position: absolute; top: -1px; width: 12px; height: 12px; border-radius: 50%; background: #e8692a; box-shadow: 0 1px 1px rgba(0,0,0,.25); }
.d1 { left: 188px; } .d2 { left: 256px; } .d3 { left: 343px; }
.d4 { left: 28px; top: -2px; }

.ribbon { display: flex; height: 94px; background: #f5f5f5; flex: none; }
.panel { display: flex; flex-direction: column; border-right: 1px solid #d4d4d4; flex: none; }
.p1 { width: 117px; padding-left: 2px; } .p2 { width: 422px; } .p3 { width: 289px; } .p4 { width: 98px; }
.pbody { position: relative; display: flex; height: 78px; padding-top: 3px; }
.ptitle { display: flex; align-items: center; justify-content: center; height: 16px; color: #333; }
.big { display: flex; flex-direction: column; align-items: center; height: 72px; padding-top: 2px; flex: none; position: relative; }
.big > svg { height: 36px; }
.big > svg[height="30"] { height: 30px; margin: 2px 0 4px; }
.big > svg[height="32"] { height: 32px; margin-bottom: 4px; }
.big > svg[height="34"] { height: 34px; margin-bottom: 2px; }
.lbl { display: block; height: 17px; line-height: 17px; white-space: nowrap; text-align: center; }
.lbl.two { height: 34px; }
.under { margin-top: 7px; }
.selected { background: #f1f8fd; border: 1px solid #3aa5dd; padding-top: 1px; }
.off { color: #aeaeae; }
.w34 { width: 34px; } .w36 { width: 36px; } .w40 { width: 40px; } .w44 { width: 44px; } .w54 { width: 54px; } .w58 { width: 58px; } .w60 { width: 60px; }
.ml1 { margin-left: 1px; } .ml3 { margin-left: 3px; } .ml4 { margin-left: 4px; } .ml5 { margin-left: 5px; } .ml8 { margin-left: 8px; } .ml10 { margin-left: 10px; } .ml11 { margin-left: 11px; }
.col { display: flex; flex-direction: column; flex: none; padding-top: 1px; }
.c50 { width: 50px; margin-left: 1px; } .c54 { width: 54px; } .c79 { width: 79px; } .c90 { width: 90px; } .c98 { width: 98px; } .c103 { width: 103px; }
.row { display: flex; align-items: center; height: 24px; white-space: nowrap; }
.ic { margin-right: 5px; } .ic17 { margin-right: 5px; } .ic18 { margin-right: 5px; } .ic15 { margin-right: 5px; }
.wide .ic { margin-right: 6px; }
.r15b .ic15 { margin-right: 6px; }
.cr { margin-left: 9px; }
.ct { margin-left: 6px; border-left-width: 4px; border-right-width: 4px; border-top-width: 4px; }
.rsep { width: 1px; height: 70px; background: #d4d4d4; flex: none; }
.spring { margin: 4px 0 0 !important; height: 34px !important; }
.rdrop { display: flex; align-items: center; justify-content: center; gap: 5px; width: 35px; height: 22px; margin: 4px 0 0 3px; background: #f2f2f2; border: 1px solid #d0d0d0; }

.middle { display: flex; flex: 1; min-height: 0; }
.browser { display: flex; flex-direction: column; width: 144px; background: #f5f5f5; flex: none; }
.bhead { display: flex; align-items: center; height: 24px; background: #d6d6d6; flex: none; }
.btab { display: flex; align-items: center; height: 24px; }
.btab:first-child { width: 28px; padding-left: 4px; font-size: 9px; color: #666; overflow: hidden; white-space: nowrap; }
.btab.act { width: 44px; gap: 9px; padding-left: 6px; background: #f5f5f5; }
.bplus { margin-left: 5px; }
.bsearch { margin-left: 14px; }
.bmenu { margin-left: 8px; }
.seg { display: flex; align-items: center; height: 30px; padding-left: 10px; flex: none; font-size: 11px; }
.segon { position: relative; color: #1a8fd8; }
.segon::after { content: ""; position: absolute; left: -4px; right: -5px; bottom: -2px; height: 1px; background: #1a8fd8; }
.segbar { width: 2px; height: 14px; margin: 0 7px 0 11px; background: #888; }
.segoff { color: #444; }
.tree { margin: 2px 0 0; padding: 0; list-style: none; font: 10.500px "Liberation Mono", "Noto Sans CJK SC", monospace; color: #111; flex: 1; overflow: hidden; }
.tree li { display: flex; align-items: center; height: 20px; white-space: nowrap; position: relative; }
.tree .root { padding-left: 4px; gap: 5px; }
.tree b { letter-spacing: .3px; }
.plus { width: 8px; height: 8px; margin: 0 6px 0 5px; flex: none; background: linear-gradient(#888,#888) center/8px 2px no-repeat, linear-gradient(#888,#888) center/2px 8px no-repeat; }
.folder { margin-right: 4px; width: 16px; }
.clip { width: 105px; overflow: hidden; font-size: 10px; }
.hscroll { display: flex; align-items: center; height: 18px; margin-bottom: 1px; background: #f0f0f0; flex: none; }
.hl { width: 18px; height: 18px; position: relative; }
.thumb { width: 82px; height: 17px; background: #cdcdcd; }
.hl::before, .hr::before { content: ""; position: absolute; top: 5px; left: 6px; width: 6px; height: 6px; border-left: 1px solid #aaa; border-bottom: 1px solid #aaa; transform: rotate(45deg); }
.hr { width: 18px; height: 18px; margin-left: 26px; position: relative; }
.hr::before { transform: rotate(225deg); left: 2px; }
.splitter { width: 4px; background: #bbb; flex: none; }
.workarea { display: flex; flex-direction: column; flex: 1; min-width: 0; }
.canvas { position: relative; flex: 1; background: #fff; overflow: hidden; }
.model { position: absolute; left: 732px; top: 160px; }
.gauge { position: absolute; left: 1612px; top: 0; }
.navbar { position: absolute; left: 1737px; top: 144px; }
.corner { position: absolute; left: 1738px; top: 7px; }
.triad { position: absolute; left: 12px; top: 760px; }
.cubetxt { font: 62px "Noto Sans CJK SC", sans-serif; fill: #bbb; }
.cubetxt.small { font-size: 46px; }
.g37 { font: 300 62px "Lato", sans-serif; fill: #333; }
.gpc { font: 300 36px "Lato", sans-serif; fill: #444; }
.gk { font: 27px "Liberation Sans", sans-serif; fill: #222; }
.ax { font: 700 30px "Liberation Serif", serif; }
.axx { fill: #f99; } .axy { fill: #9f9; } .axz { fill: #99f; }

.dialog { position: absolute; left: 133px; top: 50px; width: 537px; height: 693px; font: 11px/1.2 "Liberation Mono", "Noto Sans CJK SC", monospace; color: #111; }
.dtitle { display: flex; align-items: center; justify-content: space-between; height: 31px; padding: 0 0 0 9px; background: #fff; border-top: 1px solid #f0f0f0; color: #999; font-size: 12px; font-family: "Noto Sans CJK SC", sans-serif; }
.dclose { display: flex; align-items: center; justify-content: center; width: 19px; height: 19px; background: #e5e5e5; color: #fff; font-size: 12px; }
.dbody { position: relative; height: 662px; padding: 7px 0 0 5px; background: #efefef; }
.dtabs { display: flex; align-items: flex-end; width: 526px; height: 22px; }
.dtab { display: flex; align-items: center; gap: 7px; height: 20px; padding-left: 8px; border: 1px solid #d9d9d9; border-bottom: 0; background: #f0f0f0; flex: none; }
.dtab.on { width: 60px; height: 23px; margin-bottom: -1px; background: #fff; position: relative; z-index: 1; padding-left: 7px; }
.t2 { width: 55px; gap: 9px; padding-left: 4px; } .t3 { width: 76px; gap: 6px; padding-left: 5px; }
.fxi { font: italic 700 15px "Liberation Serif", serif; color: #333; width: 14px; white-space: nowrap; }
.fxi sub { font-size: 8px; font-style: normal; }
.dtools { display: flex; align-items: center; margin-left: auto; margin-right: -2px; margin-bottom: 6px; }
.tool { margin-right: 10px; margin-left: -3px; }
.tool.s1 { margin-right: 4px; margin-left: 0; }
.toolon { display: flex; align-items: center; justify-content: center; width: 23px; height: 21px; background: #cce4f7; border: 1px solid #99d1ff; overflow: hidden; }
.dpanel { width: 525px; height: 446px; padding: 11px 0 0 5px; background: #fff; border: 1px solid #d9d9d9; }
.dcols { display: flex; height: 416px; }
.group { position: relative; border: 1px solid #d9d9d9; flex: none; }
.legend { position: absolute; top: -8px; left: 8px; padding: 0 2px; background: #fff; line-height: 14px; }
.gtype { width: 59px; height: 101px; padding: 13px 0 0 5px; }
.tbtn { display: flex; align-items: center; justify-content: center; width: 46px; height: 39px; margin-bottom: 2px; background: #e1e1e1; border: 1px solid #adadad; }
.tbtn.sel { background: #cce4f7; border-color: #005499; }
.dcol2 { width: 223px; margin: 0 6px 0 7px; flex: none; }
.gplace { width: 223px; height: 158px; padding: 12px 0 0 8px; }
.dd { display: flex; align-items: center; width: 206px; height: 22px; padding: 0 7px 0 3px; background: #e1e1e1; border: 1px solid #adadad; white-space: nowrap; }
.dd.thin { height: 19px; }
.dd .chev { margin-left: auto; }
.ddic { margin-right: 5px; }
.mono { padding-left: 3px; font-size: 10px; }
.prow { display: flex; align-items: center; gap: 11px; margin-left: 1px; }
.first { margin-top: 6px; } .second { margin-top: 5px; } .last { margin-top: 11px; }
.pbtn { width: 30px; height: 24px; background: #e1e1e1; border: 1px solid #adadad; flex: none; }
.pbtn svg { margin: -1px; }
.chkrow { display: flex; align-items: center; gap: 5px; height: 13px; margin-top: 9px; color: #999; }
.chk { width: 13px; height: 13px; background: #fff; border: 1px solid #ccc; }
.gthread { width: 223px; height: 68px; margin-top: 10px; padding: 12px 0 0 8px; }
.diarow { display: flex; align-items: center; justify-content: space-between; width: 206px; margin-top: 8px; }
.dialbl { padding-left: 1px; }
.w111 { width: 111px; padding-left: 5px; }
.fastlist { width: 219px; height: 416px; background: #fff; border: 1px solid #7a7f88; flex: none; }
.flhead { height: 18px; padding: 1px 0 0 4px; background: #f0f0f0; border-bottom: 3px double #777; line-height: 14px; }
.expand { display: flex; align-items: center; width: 515px; height: 14px; margin-top: 2px; border-top: 1px solid #a0a0a0; }
.dbl { width: 13px; font: 700 8px "DejaVu Sans", sans-serif; text-align: center; }
.dline { flex: 1; height: 3px; border-top: 1px solid #aaa; border-bottom: 1px solid #888; }
.dbtns { display: flex; align-items: center; width: 526px; height: 19px; margin-top: 8px; }
.hbtn { display: flex; align-items: center; justify-content: center; width: 31px; height: 19px; margin-left: 1px; background: #e1e1e1; border: 1px solid #adadad; }
.qm2 { font: 700 10px "Liberation Sans", sans-serif; text-anchor: middle; fill: #1e3fc0; }
.btn { display: flex; align-items: center; justify-content: center; width: 72px; height: 19px; margin-left: 8px; background: #e1e1e1; border: 1px solid #adadad; }
.btn.okb { margin-left: 230px; }
.btn.back { width: 24px; background: #cce4f7; border-color: #005499; }
.dsep { width: 526px; height: 2px; margin-top: 6px; background: #aaa; border-bottom: 1px solid #fff; }
.glib { display: flex; justify-content: space-between; width: 519px; height: 142px; margin-top: 10px; padding: 14px 4px 0 4px; }
.glib .legend { background: #efefef; left: 8px; }
.liblist { width: 407px; height: 124px; background: #fff; border: 1px solid #7a7f88; }
.libbtns { display: flex; flex-direction: column; justify-content: flex-end; gap: 7px; width: 96px; height: 122px; }
.dis { display: flex; align-items: center; justify-content: center; height: 19px; background: #ccc; border: 1px solid #bfbfbf; color: #888; }
.grip { position: absolute; right: 1px; bottom: 1px; }

.doctabs { display: flex; align-items: center; height: 24px; background: #d6d6d6; flex: none; }
.dhome { margin-left: 4px; }
.doctab { display: flex; align-items: center; gap: 7px; width: 90px; height: 24px; margin-left: 8px; padding: 0 0 3px 7px; background: #f5f5f5; border-bottom: 3px solid #36a9e1; color: #2a9ad8; white-space: nowrap; }
.dmenu { margin-left: auto; margin-right: 4px; }
.status { display: flex; align-items: center; height: 25px; background: #eee; border-bottom: 2px solid #bbb; position: relative; flex: none; }
.status::after { content: ""; position: absolute; left: 0; bottom: -2px; width: 48px; height: 2px; background: #333; }
.stext { padding: 1px 0 0 1px; font-family: "Noto Sans CJK SC", sans-serif; color: #333; }
.scell { display: flex; align-items: center; height: 23px; border-left: 1px solid #d4d4d4; }
.s4 { width: 40px; margin-left: auto; padding-left: 10px; }
.s3 { width: 37px; padding-left: 9px; }
```
